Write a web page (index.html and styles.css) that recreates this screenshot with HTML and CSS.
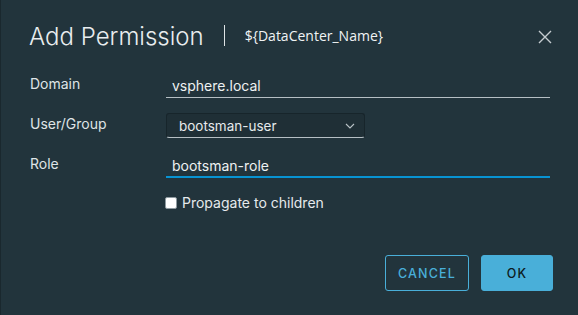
FILE: index.html
```html
<!DOCTYPE html>
<html>
<head>
<meta charset="utf-8">
<link rel="stylesheet" href="styles.css">
</head>
<body>
<div class="modal">
  <div class="header">
    <h1 class="title">Add Permission</h1>
    <span class="sep"></span>
    <span class="subtitle">${DataCenter_Name}</span>
    <button class="close" aria-label="Close">
      <svg width="14" height="14" viewBox="0 0 14 14"><path d="M1 1L13 13M13 1L1 13" stroke="#c5ccd0" stroke-width="1.4" fill="none"/></svg>
    </button>
  </div>
  <div class="form">
    <div class="row">
      <label class="label">Domain</label>
      <div class="input">vsphere.local</div>
    </div>
    <div class="row">
      <label class="label">User/Group</label>
      <div class="select">
        <span>bootsman-user</span>
        <svg class="chev" width="10" height="6" viewBox="0 0 10 6"><path d="M1 1L5 5L9 1" stroke="#b9c2c7" stroke-width="1.1" fill="none"/></svg>
      </div>
    </div>
    <div class="row">
      <label class="label">Role</label>
      <div class="input active">bootsman-role</div>
    </div>
    <div class="row check-row">
      <span class="label"></span>
      <label class="check"><span class="box"></span>Propagate to children</label>
    </div>
  </div>
  <div class="footer">
    <button class="btn outline">CANCEL</button>
    <button class="btn primary">OK</button>
  </div>
</div>
</body>
</html>
```
FILE: styles.css
```css
html, body {
  margin: 0;
  padding: 0;
  background: #22343c;
  width: 578px;
  height: 315px;
  overflow: hidden;
}
.modal {
  width: 578px;
  height: 315px;
  box-sizing: border-box;
  font-family: "Inter", "Lato", sans-serif;
  color: #e6eaec;
  border-left: 1px solid #1a282e;
}
.header {
  display: flex;
  align-items: center;
  height: 70px;
  padding: 0 26px 0 28px;
}
.title {
  margin: 0;
  font-weight: 300;
  font-size: 24px;
  letter-spacing: 0;
  color: #e9edef;
  position: relative;
  top: 1px;
}
.sep {
  width: 1px;
  height: 21px;
  background: #dfe4e6;
  margin: 0 20px 0 20px;
}
.subtitle {
  font-family: "Open Sans", sans-serif;
  font-size: 14px;
  color: #f0f3f4;
  flex: 1;
}
.close {
  background: none;
  border: 0;
  padding: 0;
  width: 14px;
  height: 14px;
  margin-top: 4px;
  display: flex;
}
.form {
  padding: 0 28px 0 29px;
}
.row {
  display: flex;
  align-items: flex-end;
  height: 40px;
}
.row:first-child {
  height: 28px;
}
.label {
  width: 136px;
  font-size: 14px;
  color: #dfe4e6;
  padding-bottom: 6px;
}
.input {
  flex: 1;
  font-size: 14px;
  color: #eef1f2;
  padding: 0 6px 3px;
  border-bottom: 1px solid #b6bfc4;
}
.input.active {
  border-bottom: 2px solid #0893d2;
  padding-bottom: 2px;
}
.select {
  width: 199px;
  height: 25px;
  box-sizing: border-box;
  display: flex;
  align-items: center;
  justify-content: space-between;
  padding: 0 9px 0 12px;
  border: 1px solid #17252b;
  border-bottom: 1px solid #b6bfc4;
  border-radius: 3px;
  font-size: 13.5px;
  color: #e6eaec;
  background: #1f2f36;
}
.check-row {
  height: 33px;
}
.check-row .label {
  padding-bottom: 0;
}
.check {
  display: flex;
  align-items: center;
  font-size: 14px;
  color: #e6eaec;
}
.box {
  width: 10px;
  height: 10px;
  background: #ffffff;
  border: 1px solid #8e9aa0;
  border-radius: 2px;
  margin-right: 5px;
  margin-left: -1px;
}
.footer {
  display: flex;
  justify-content: flex-end;
  gap: 12px;
  padding: 44px 25px 0 0;
}
.btn {
  height: 36px;
  box-sizing: border-box;
  border-radius: 3px;
  font-family: "Inter", "Lato", sans-serif;
  font-size: 12.5px;
  font-weight: 500;
  letter-spacing: 1.2px;
  cursor: pointer;
}
.btn.outline {
  width: 84px;
  background: transparent;
  border: 1px solid #49afd9;
  color: #49afd9;
}
.btn.primary {
  width: 72px;
  background: #49afd9;
  border: 1px solid #49afd9;
  color: #0d1b21;
}
```
